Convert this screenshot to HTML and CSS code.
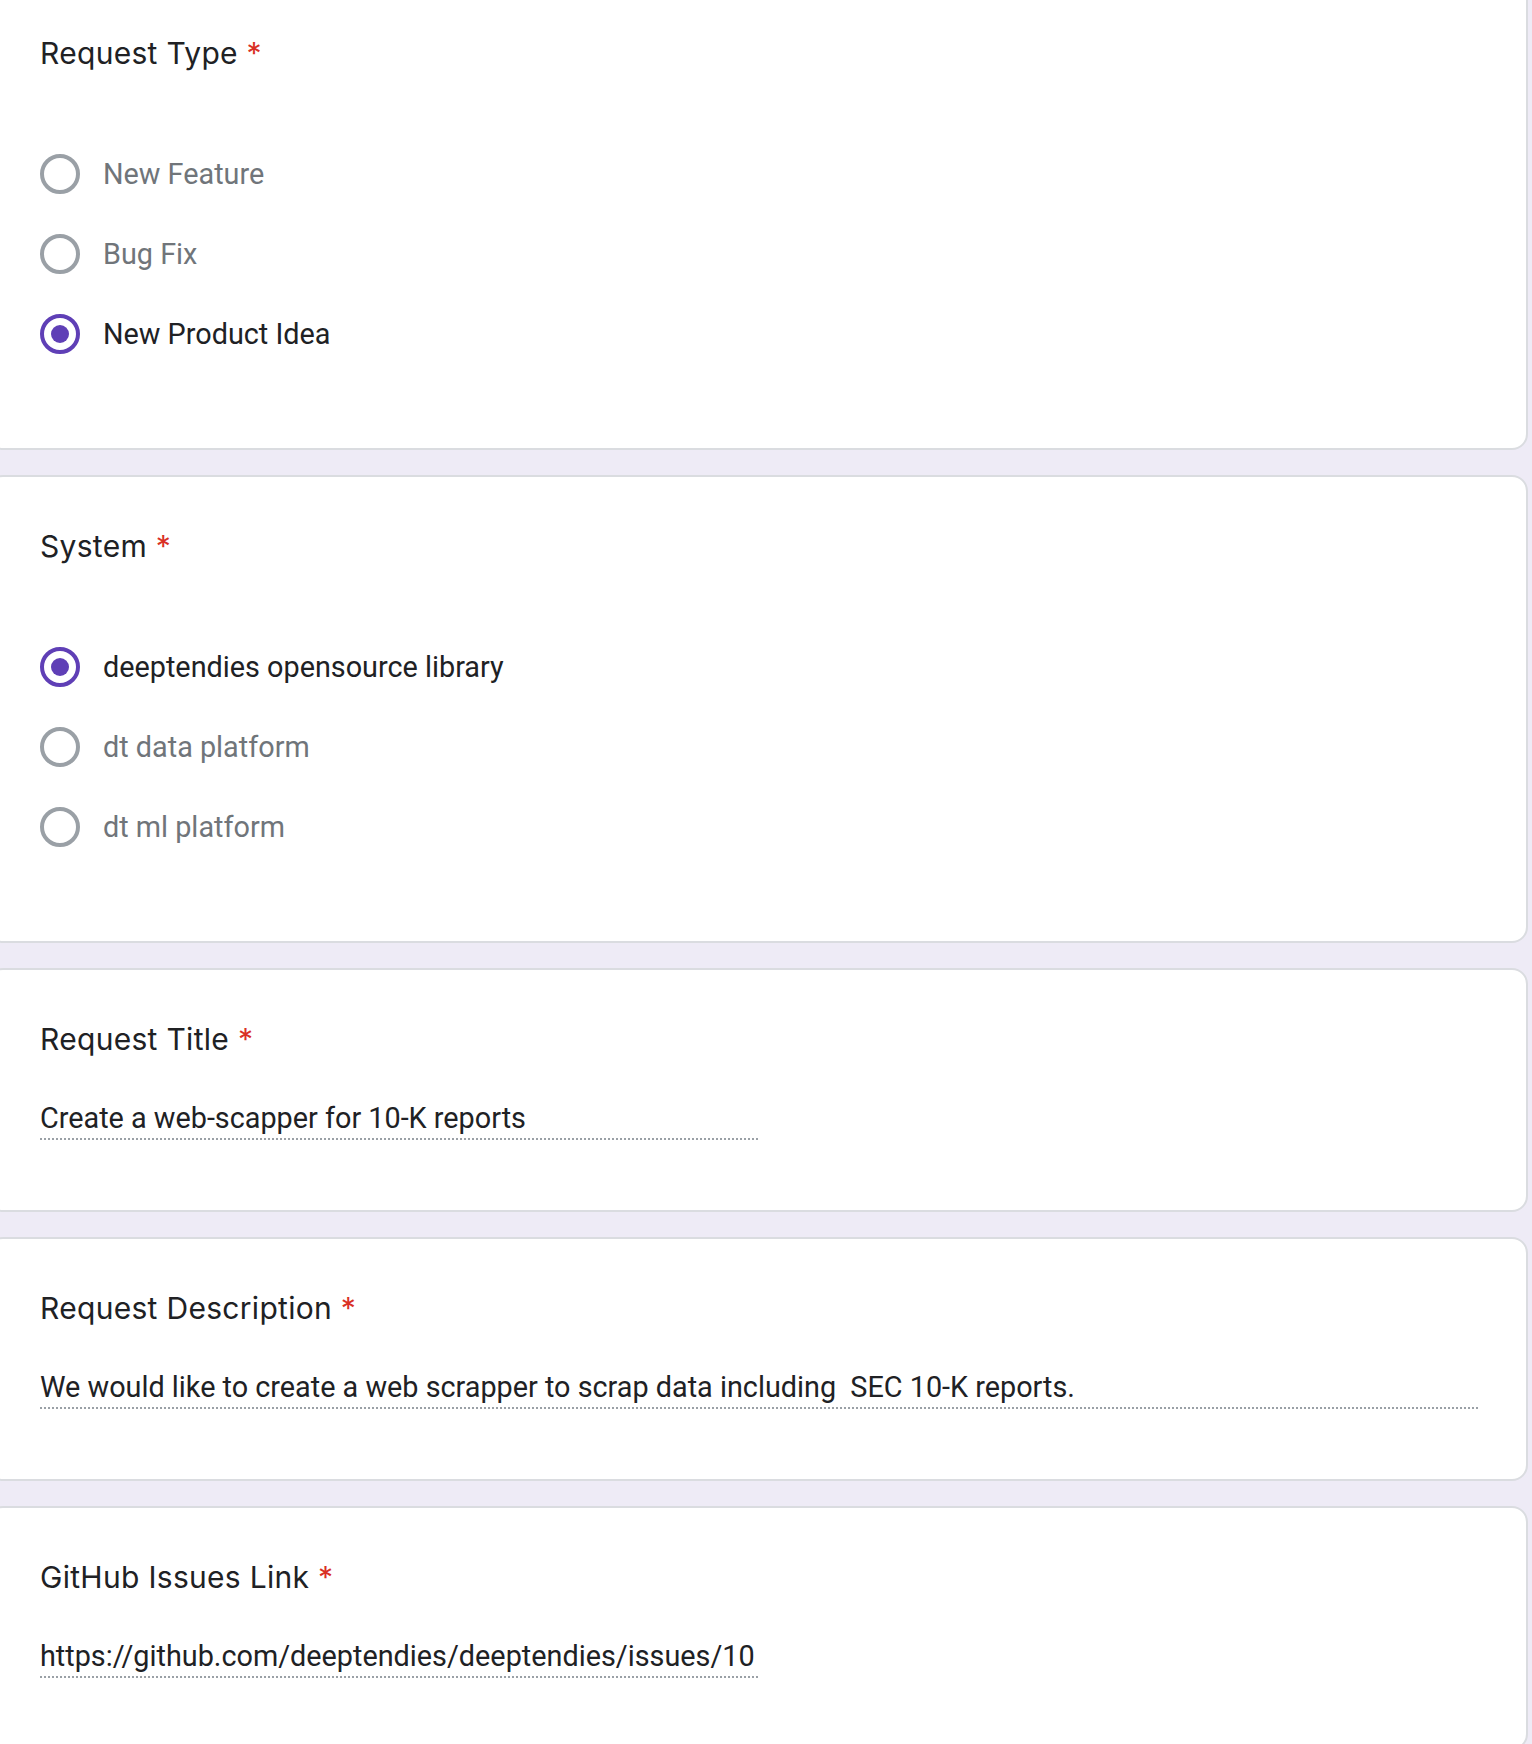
FILE: index.html
```html
<!DOCTYPE html>
<html lang="en">
<head>
<meta charset="utf-8">
<title>Request Form</title>
<link rel="stylesheet" href="styles.css">
</head>
<body>
<div class="form">
  <section class="card">
    <h2 class="q-title">Request Type <span class="req">*</span></h2>
    <div class="options">
      <label class="option"><span class="radio"></span><span class="opt-text">New Feature</span></label>
      <label class="option"><span class="radio"></span><span class="opt-text">Bug Fix</span></label>
      <label class="option selected"><span class="radio"></span><span class="opt-text">New Product Idea</span></label>
    </div>
  </section>
  <section class="card">
    <h2 class="q-title">System <span class="req">*</span></h2>
    <div class="options">
      <label class="option selected"><span class="radio"></span><span class="opt-text">deeptendies opensource library</span></label>
      <label class="option"><span class="radio"></span><span class="opt-text">dt data platform</span></label>
      <label class="option"><span class="radio"></span><span class="opt-text">dt ml platform</span></label>
    </div>
  </section>
  <section class="card text-card">
    <h2 class="q-title">Request Title <span class="req">*</span></h2>
    <div class="answer short">Create a web-scapper for 10-K reports</div>
  </section>
  <section class="card text-card">
    <h2 class="q-title">Request Description <span class="req">*</span></h2>
    <div class="answer long">We would like to create a web scrapper to scrap data including&nbsp; SEC 10-K reports.</div>
  </section>
  <section class="card text-card">
    <h2 class="q-title">GitHub Issues Link <span class="req">*</span></h2>
    <div class="answer short">https://github.com/deeptendies/deeptendies/issues/10</div>
  </section>
</div>
</body>
</html>
```
FILE: styles.css
```css
html, body {
  margin: 0;
  padding: 0;
}
body {
  background: #eeebf6;
  font-family: Roboto, "Liberation Sans", sans-serif;
  color: #202124;
  overflow: hidden;
}
.form {
  margin-left: -13px;
  margin-top: -18px;
  width: 1541px;
  display: flex;
  flex-direction: column;
  gap: 25px;
}
.card {
  background: #ffffff;
  border: 2px solid #dadce0;
  border-radius: 16px;
  padding: 49px 48px 74px 51px;
}
.card.text-card {
  padding-bottom: 70px;
}
.q-title {
  margin: 0;
  font-family: Inter, "Open Sans", sans-serif;
  font-weight: 400;
  font-size: 30px;
  line-height: 40px;
  letter-spacing: 0.3px;
  color: #202124;
}
.req {
  color: #d93025;
}
.options {
  margin-top: 61px;
  display: flex;
  flex-direction: column;
}
.option {
  height: 80px;
  display: flex;
  align-items: center;
  gap: 23px;
  font-size: 28.8px;
  color: #70757a;
}
.option.selected {
  color: #202124;
}
.radio {
  width: 40px;
  height: 40px;
  box-sizing: border-box;
  border: 4.5px solid #9aa0a6;
  border-radius: 50%;
  display: flex;
  align-items: center;
  justify-content: center;
  flex: none;
}
.option.selected .radio {
  border-color: #5f3fb6;
}
.option.selected .radio::after {
  content: "";
  width: 18px;
  height: 18px;
  border-radius: 50%;
  background: #5f3fb6;
}
.answer {
  margin-top: 43px;
  font-size: 28.8px;
  line-height: 32px;
  color: #202124;
  white-space: nowrap;
  background-image: linear-gradient(to right, #9aa0a6 50%, transparent 50%);
  background-size: 4px 2px;
  background-repeat: repeat-x;
  background-position: left bottom;
  padding-bottom: 6px;
}
.answer.short {
  width: 720px;
}
.answer.long {
  width: 1440px;
}
```
